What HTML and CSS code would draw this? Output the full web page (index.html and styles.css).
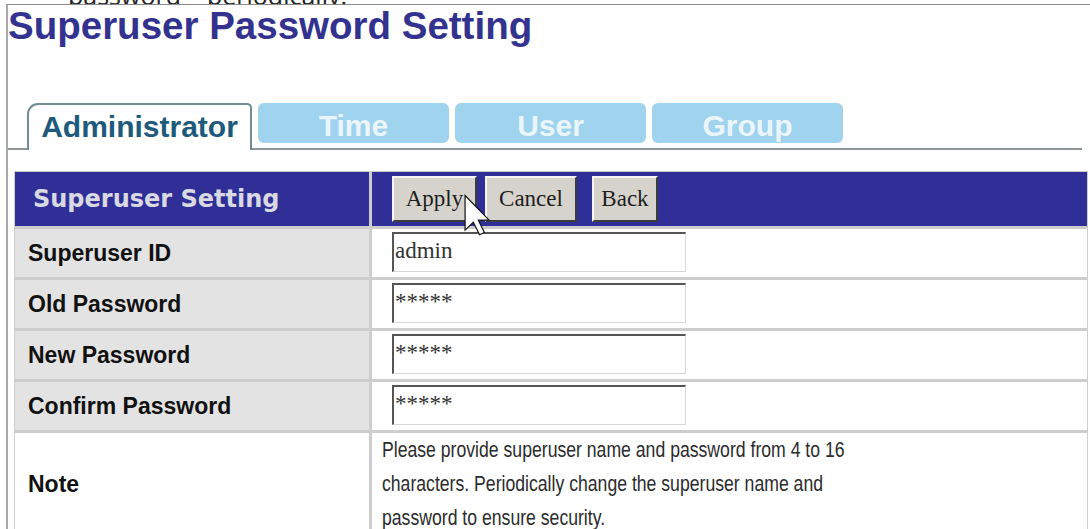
FILE: index.html
```html
<!DOCTYPE html>
<html lang="en">
<head>
<meta charset="utf-8">
<title>Superuser Password Setting</title>
<link rel="stylesheet" href="styles.css">
</head>
<body>
  <div class="lead">
    <p class="lead-text">password<span class="lead-gap"></span>periodically.</p>
  </div>

  <div class="frame">
    <h1 class="title">Superuser Password Setting</h1>

    <div class="tabs">
      <div class="tab tab-active">Administrator</div>
      <div class="tab">Time</div>
      <div class="tab">User</div>
      <div class="tab">Group</div>
    </div>

    <div class="grid">
      <div class="head-label">Superuser Setting</div>
      <div class="head-actions">
        <button class="btn btn-apply" type="button">Apply</button>
        <button class="btn btn-cancel" type="button">Cancel</button>
        <button class="btn btn-back" type="button">Back</button>
        <svg class="pointer" viewBox="0 0 12 19" width="26" height="42" aria-hidden="true">
          <path d="M0.5 0.5 L0.5 16.5 L4.3 12.8 L7.2 18.6 L9.4 17.6 L6.6 11.9 L11.6 11.9 Z" fill="#fff" stroke="#111" stroke-width="0.55" stroke-linejoin="miter"/>
        </svg>
      </div>

      <div class="label">Superuser ID</div>
      <div class="value"><input class="field" type="text" value="admin"></div>

      <div class="label">Old Password</div>
      <div class="value"><input class="field" type="text" value="*****"></div>

      <div class="label">New Password</div>
      <div class="value"><input class="field" type="text" value="*****"></div>

      <div class="label">Confirm Password</div>
      <div class="value"><input class="field" type="text" value="*****"></div>

      <div class="label label-plain">Note</div>
      <div class="note">
        <p class="note-text">Please provide superuser name and password from 4 to 16 characters. Periodically change the superuser name and password to ensure security.</p>
      </div>
    </div>
  </div>
</body>
</html>
```

FILE: styles.css
```css
html,
body {
  margin: 0;
  background: #fff;
}

body {
  width: 1090px;
  height: 529px;
  overflow: hidden;
  font-family: "Liberation Sans", Arial, sans-serif;
}

/* tail of the paragraph above, scrolled mostly out of view */
.lead {
  height: 4px;
  overflow: hidden;
  padding-left: 68px;
}

.lead-text {
  margin: -10px 0 0;
  font: 25px/10px "Open Sans", sans-serif;
  color: #222;
  white-space: nowrap;
}

.lead-gap {
  display: inline-block;
  width: 26px;
}

/* page frame */
.frame {
  margin-left: 6px;
  border-left: 2px solid #a9a9a9;
  border-top: 1px solid #8a8a8a;
}

.title {
  margin: 0;
  font: bold 38.5px/42px "Liberation Sans", Arial, sans-serif;
  color: #33338f;
}

/* tab strip */
.tabs {
  display: flex;
  align-items: flex-end;
  height: 45px;
  margin: 56px 8px 0 0;
  padding-left: 19px;
  border-bottom: 2px solid #8b9395;
}

.tab {
  box-sizing: border-box;
  width: 191px;
  height: 40px;
  margin: 0 0 5px 6px;
  padding-top: 4px;
  background: #9fd3ee;
  border-radius: 6px;
  color: #eaf6fc;
  font: bold 30px/38px "Liberation Sans", Arial, sans-serif;
  text-align: center;
}

.tab-active {
  width: 225px;
  height: 47px;
  margin: 0 0 -2px 0;
  padding-top: 0;
  background: #fff;
  border: 2px solid #6f8c93;
  border-bottom: 0;
  border-radius: 11px 5px 0 0;
  color: #1d5a7c;
  line-height: 44px;
}

/* settings table */
.grid {
  display: grid;
  grid-template-columns: 354px 1fr;
  grid-template-rows: 54px repeat(4, 48px) auto;
  gap: 3px;
  box-sizing: border-box;
  width: 1074px;
  margin: 21px 0 0 6px;
  border: 1px solid #cdcdcd;
  background: #cdcdcd;
}

.head-label {
  display: flex;
  align-items: center;
  padding-left: 18px;
  background: #2f2f97;
  color: #d9d9e3;
  font: bold 24px "DejaVu Sans", Verdana, sans-serif;
}

.head-actions {
  position: relative;
  display: flex;
  align-items: center;
  padding-left: 20px;
  background: #2f2f97;
}

.btn {
  box-sizing: border-box;
  height: 46px;
  padding: 0;
  background: #d6d3cc;
  border: 2px solid;
  border-color: #f4f4f4 #3c3c3c #3c3c3c #f4f4f4;
  color: #1e1e1e;
  font: 23px "Liberation Serif", "Times New Roman", serif;
}

.btn-apply {
  width: 85px;
  margin-right: 8px;
}

.btn-cancel {
  width: 92px;
  margin-right: 15px;
}

.btn-back {
  width: 66px;
}

.pointer {
  position: absolute;
  left: 92px;
  top: 22px;
  z-index: 2;
}

.label {
  display: flex;
  align-items: center;
  padding-left: 13px;
  background: #e3e3e3;
  color: #111;
  font: bold 23px "Liberation Sans", Arial, sans-serif;
}

.label-plain {
  background: #fff;
}

.value {
  padding: 3px 0 0 20px;
  background: #fff;
}

.field {
  box-sizing: border-box;
  display: block;
  width: 294px;
  height: 40px;
  margin: 0;
  padding: 4px 1px 7px;
  border-style: solid;
  border-width: 2px 1px 1px 2px;
  border-color: #555 #d8d8d8 #d8d8d8 #555;
  background: #fff;
  color: #333;
  font: 23px "Liberation Serif", "Times New Roman", serif;
  outline: none;
}

.note {
  padding: 0 10px;
  background: #fff;
}

/* narrow sans: regular face squeezed horizontally */
.note-text {
  width: 598px;
  margin: 0;
  color: #2c2c2c;
  font: 21.5px/34px "Liberation Sans", Arial, sans-serif;
  transform: scaleX(0.82);
  transform-origin: 0 0;
}
```
